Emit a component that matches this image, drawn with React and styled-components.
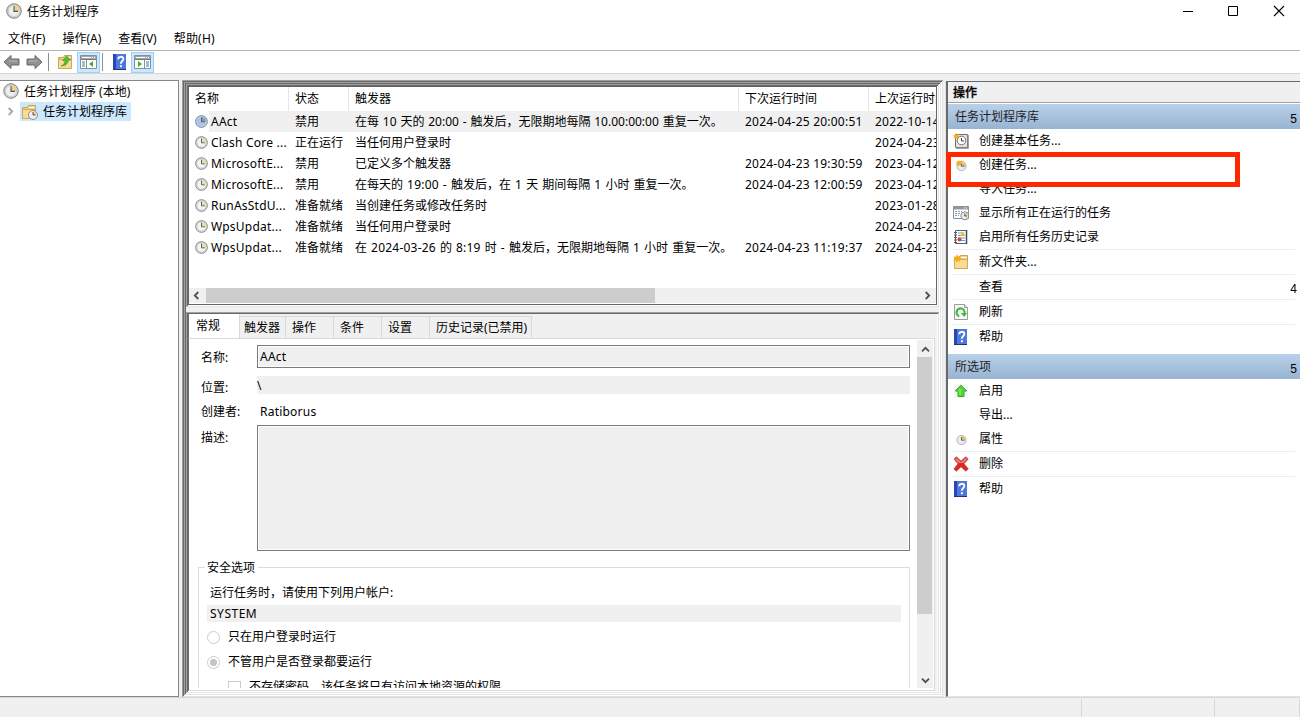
//App.jsx holds the task scheduler window
import React from 'react';
import styled, { createGlobalStyle } from 'styled-components';

const GlobalStyle = createGlobalStyle`
  * {
    box-sizing: border-box;
  }
  body {
    margin: 0;
    overflow: hidden;
    background: #f0f0f0;
    font-family: 'Noto Sans', 'Noto Sans CJK SC', sans-serif;
    font-size: 12px;
    line-height: 20px;
    color: #000;
  }
  svg {
    display: block;
    flex: none;
  }
`;

const Window = styled.div`
  display: flex;
  flex-direction: column;
  width: 1300px;
  height: 717px;
  overflow: hidden;
  white-space: pre;
  background: #f0f0f0;
`;

const TitleBar = styled.header`
  display: flex;
  align-items: center;
  height: 23px;
  padding-left: 6px;
  background: #fff;
`;

const Title = styled.span`
  flex: 1;
  padding: 2px 0 0 5px;
`;

const WindowButtons = styled.div`
  display: flex;
  gap: 34px;
  padding-right: 15px;
`;

const MenuBar = styled.nav`
  display: flex;
  gap: 17px;
  height: 28px;
  padding: 6px 0 0 8px;
  background: #fff;
  border-bottom: 1px solid #b4b4b4;
`;

const MenuItem = styled.span`
  letter-spacing: ${(p) => p.$spacing || '0'};
`;

const Toolbar = styled.div`
  display: flex;
  align-items: center;
  height: 23px;
  padding-top: 1px;
  background: #fff;
  border-bottom: 1px solid #d5d5d5;
`;

const ToolButton = styled.span`
  display: flex;
  align-items: center;
  justify-content: center;
  width: ${(p) => p.$width || 23}px;
  height: 21px;
  background: ${(p) => (p.$active ? '#cce8ff' : 'transparent')};
  border: 1px solid ${(p) => (p.$active ? '#99d1ff' : 'transparent')};
`;

const ToolDivider = styled.span`
  width: 1px;
  height: 18px;
  margin: 0 ${(p) => p.$right}px 0 ${(p) => p.$left}px;
  background: #8c8c8c;
`;

const Body = styled.main`
  display: flex;
  height: 624px;
  padding-top: 6px;
`;

const Tree = styled.aside`
  width: 179px;
  height: 617px;
  margin-right: 3px;
  background: #fff;
  border-top: 1px solid #828790;
  border-right: 1px solid #828790;
  border-bottom: 1px solid #828790;
`;

const TreeRow = styled.div`
  display: flex;
  align-items: center;
  height: ${(p) => p.$height || 20}px;
  padding-left: ${(p) => p.$indent || 3}px;
`;

const TreeLabel = styled.span`
  display: flex;
  align-items: center;
  height: 19px;
  margin-left: ${(p) => p.$gap || 0}px;
  padding: ${(p) => (p.$selected ? '0 4px 0 1px' : '2px 0 0')};
  gap: 5px;
  background: ${(p) => (p.$selected ? '#cce8ff' : 'transparent')};
`;

const Center = styled.section`
  display: flex;
  flex-direction: column;
  width: 761px;
  height: 617px;
  padding: 4px;
  margin-right: 3px;
  background: #f0f0f0;
  box-shadow: inset 1px 1px #a0a0a0, inset -1px -1px #e3e3e3, inset 2px 2px #696969, inset -2px -2px #fff,
    inset 3px 3px #a0a0a0, inset -3px -3px #e3e3e3, inset 4px 4px #696969, inset -4px -4px #fff;
`;

const Pane = styled.div`
  width: 753px;
  height: ${(p) => p.$height}px;
  padding: 2px;
  margin-bottom: ${(p) => p.$gap || 0}px;
  box-shadow: inset 1px 1px #a0a0a0, inset -1px -1px #e3e3e3, inset 2px 2px #696969, inset -2px -2px #fff;
`;

const List = styled.div`
  display: flex;
  flex-direction: column;
  width: 749px;
  height: 219px;
  overflow: hidden;
  background: #fff;
  border: 1px solid #646464;
`;

const ListRow = styled.div`
  display: grid;
  grid-template-columns: 100px 60px 390px 130px 180px;
  flex: none;
  height: ${(p) => (p.$head ? 24 : 21)}px;
  line-height: ${(p) => (p.$head ? 24 : 21)}px;
  background: ${(p) => (p.$selected ? 'linear-gradient(90deg, #fff 20px, #f0f0f0 20px)' : '#fff')};
`;

const Cell = styled.span`
  display: flex;
  align-items: center;
  gap: 3px;
  padding-left: 6px;
  overflow: hidden;
  border-right: 1px solid ${(p) => (p.$head ? '#e5e5e5' : 'transparent')};
`;

const Latin = styled.span`
  letter-spacing: ${(p) => p.$spacing ?? 0.22}px;
  word-spacing: ${(p) => p.$gap || 0}px;
`;

const HScroll = styled.div`
  display: flex;
  align-items: center;
  height: 15px;
  margin-top: auto;
  margin-bottom: 1px;
  padding: 0 4px 0 3px;
  background: #f0f0f0;
`;

const HThumb = styled.span`
  width: 449px;
  height: 15px;
  margin-left: 5px;
  margin-right: auto;
  background: #cdcdcd;
`;

const Tabs = styled.div`
  display: flex;
  align-items: flex-end;
  width: 749px;
  height: 24px;
  border-left: 1px solid #696969;
`;

const Tab = styled.span`
  width: ${(p) => p.$width}px;
  height: ${(p) => (p.$active ? 24 : 22)}px;
  padding-left: ${(p) => p.$pad}px;
  line-height: ${(p) => (p.$active ? 22 : 21)}px;
  background: ${(p) => (p.$active ? '#fff' : '#f0f0f0')};
  border-top: 1px solid ${(p) => (p.$active ? '#fff' : '#d9d9d9')};
  border-right: 1px solid #d9d9d9;
`;

const Page = styled.div`
  display: flex;
  width: 747px;
  height: 353px;
  padding: 1px 1px 2px 0;
  background: #fff;
  border: 1px solid #d9d9d9;
  border-left-color: #696969;
`;

const Form = styled.div`
  width: 728px;
  height: 348px;
  padding: 5px 0 0 12px;
  overflow: hidden;
`;

const Field = styled.div`
  display: flex;
  height: ${(p) => p.$height}px;
  margin-bottom: ${(p) => p.$gap}px;
`;

const FieldLabel = styled.label`
  width: 56px;
  padding-top: ${(p) => p.$top || 0}px;
`;

const Value = styled.div`
  width: 653px;
  padding-left: ${(p) => (p.$boxed ? 2 : p.$pad || 0)}px;
  line-height: ${(p) => p.$line || 20}px;
  background: ${(p) => (p.$plain ? '#fff' : '#f0f0f0')};
  border: ${(p) => (p.$boxed ? '1px solid #7a7a7a' : 'none')};
  box-shadow: ${(p) => (p.$boxed ? 'inset 0 0 0 1px #fff' : 'none')};
`;

const Group = styled.fieldset`
  width: 712px;
  height: 200px;
  margin: 0 0 0 -3px;
  padding: 5px 8px 0;
  border: 1px solid #dcdcdc;
`;

const Legend = styled.legend`
  height: 20px;
  margin-left: -2px;
  padding: 0 3px 0 2px;
`;

const GroupLine = styled.div`
  height: 22px;
  padding-left: 3px;
`;

const Account = styled.div`
  width: 694px;
  height: 17px;
  margin-bottom: 5px;
  padding-left: 3px;
  line-height: 17px;
  background: #f0f0f0;
`;

const Option = styled.div`
  display: flex;
  align-items: center;
  gap: 8px;
  height: 20px;
  margin-bottom: 5px;
  padding-left: ${(p) => p.$indent || 0}px;
`;

const Radio = styled.span`
  width: 13px;
  height: 13px;
  margin-top: 1px;
  border: 1px solid #ccc;
  border-radius: 50%;
  background: ${(p) => (p.$checked ? 'radial-gradient(#c4c4c4 3.2px, #fff 4px)' : '#fff')};
`;

const Checkbox = styled.span`
  width: 13px;
  height: 13px;
  margin-top: 1px;
  border: 1px solid #ccc;
`;

const VScroll = styled.div`
  display: flex;
  flex-direction: column;
  align-items: center;
  width: 16px;
  height: 348px;
  padding: 5px 0 3px;
  background: #f0f0f0;
`;

const VThumb = styled.span`
  width: 15px;
  height: 257px;
  margin: 3px 1px auto 0;
  background: #cdcdcd;
`;

const Actions = styled.aside`
  position: relative;
  width: 354px;
  height: 616px;
  margin-top: 1px;
  padding-top: 1px;
  background: #fff;
  border-left: 2px solid #696969;
  border-bottom: 1px solid #e3e3e3;
  box-shadow: inset 0 1px #696969, -1px 0 #e3e3e3;
`;

const ActionsTitle = styled.div`
  height: 21px;
  margin-bottom: 1px;
  padding-left: 5px;
  line-height: 22px;
  font-weight: 500;
  -webkit-text-stroke: 0.3px #000;
  background: #f0f0f0;
  border-bottom: 1px solid #a0a0a0;
`;

const Band = styled.div`
  display: flex;
  justify-content: space-between;
  height: 25px;
  margin-top: ${(p) => p.$top || 0}px;
  padding: 0 3px 0 7px;
  line-height: 25px;
  color: #1e1e1e;
  background: linear-gradient(#b9d1ea, #98b4d2);
`;

const Marker = styled.span`
  padding-top: 3px;
  font-family: 'Liberation Sans', sans-serif;
  color: #000;
`;

const Action = styled.div`
  display: flex;
  align-items: center;
  height: ${(p) => (p.$line ? 25 : 24)}px;
  margin: 0 5px;
  border-bottom: ${(p) => (p.$line ? '1px solid #ededed' : 'none')};

  ${Marker} {
    margin-right: -2px;
    padding-top: 5px;
  }
`;

const ActionIcon = styled.span`
  display: flex;
  justify-content: center;
  width: 16px;
  margin-right: 10px;
`;

const ActionText = styled.span`
  flex: 1;
`;

const Highlight = styled.div`
  position: absolute;
  top: 71px;
  left: -2px;
  width: 294px;
  height: 35px;
  border: 5px solid #ff2600;
`;

const StatusBar = styled.footer`
  display: flex;
  height: 20px;
  padding-top: 1px;
  border-top: 1px solid #d7d7d7;
`;

const StatusCell = styled.span`
  width: ${(p) => p.$width}px;
  border-right: 1px solid #d7d7d7;
`;

function ClockIcon({ size = 16, face = '#eceff0', wedge = '#f3cf86', rim = '#858585' }) {
  return (
    <svg width={size} height={size} viewBox="0 0 16 16">
      <circle cx="8" cy="8" r="7.3" fill="#d2d2d2" stroke={rim} />
      <circle cx="8" cy="8" r="5.6" fill={face} stroke="#b9bcbe" strokeWidth=".6" />
      <path d="M8 8V2.5A5.5 5.5 0 0 1 13.5 8z" fill={wedge} />
      <path d="M8 3.2v5.2h4" fill="none" stroke="#4d535a" strokeWidth="1.1" />
    </svg>
  );
}

function ArrowIcon({ right }) {
  return (
    <svg width="17" height="16" viewBox="0 0 17 16">
      <path
        d="M1 8 8 1.5V5h8v6H8v3.5z"
        transform={right ? 'rotate(180 8.5 8)' : undefined}
        fill="#929292"
        stroke="#686868"
        strokeLinejoin="round"
      />
      <path d={right ? 'M3 7h8' : 'M6 7h8'} stroke="#b9b9b9" />
    </svg>
  );
}

function FolderIcon({ kind }) {
  return (
    <svg width="17" height="16" viewBox="0 0 17 16">
      <path d="M1.5 14.5v-11h5l1-2h7v13z" fill="#f2d282" stroke="#c9a350" />
      <path d="M8.5 3.5h5" stroke="#fff" />
      <path d="M1.5 5.5h13v9h-13z" fill="#f7dc94" stroke="#d0aa58" />
      {kind === 'up' && (
        <path d="M4 11.8c2.6-.6 3.8-2.2 4-5H5.8L9.5 2l4.2 3.8-2.5.6c-.4 3.4-3 5.8-7.2 5.4z" fill="#55bd36" stroke="#378d22" strokeWidth=".6" />
      )}
      {kind === 'clock' && (
        <g>
          <circle cx="12" cy="11" r="4.5" fill="#edf0f2" stroke="#8b9297" />
          <path d="M12 11V7.3a3.7 3.7 0 0 1 3.7 3.7z" fill="#f3cf86" />
          <path d="M12 8v3h2.5" fill="none" stroke="#555" />
        </g>
      )}
      {kind === 'new' && <Star />}
    </svg>
  );
}

function Star() {
  return <path d="M4 0l1 2.5L8 1 6.8 3.8 9 5 6.5 5.8 7.5 8 4.8 6.8 3.5 9 3 6.3 0 6.8 2 4.8 0 2.5l3 .3z" fill="#f8a91c" />;
}

function PanelIcon({ right }) {
  return (
    <svg width="17" height="14" viewBox="0 0 17 14">
      <path d="M.5.5h16v13H.5z" fill="#fff" stroke="#8a8f94" />
      <path d="M1 1h15v3H1z" fill="#a2a8ae" />
      <path d="M2 2.5h9M12 2.5h1M14 2.5h1" stroke="#fff" />
      <path d="M1 4.5h15" stroke="#777" />
      <path d={right ? 'M10.5 5v8.5' : 'M6.5 5v8.5'} stroke="#8a8f94" />
      <path d={right ? 'M12 7h3M12 9h3M12 11h3' : 'M2 7h3M2 9h3M2 11h3'} stroke="#3e78b5" />
      <path d={right ? 'M4 6v6l4-3z' : 'M13 6v6l-4-3z'} fill="#3bb325" />
    </svg>
  );
}

function HelpIcon() {
  return (
    <svg width="16" height="16" viewBox="-1 0 16 16">
      <path d="M0 0h13v16H0z" fill="#2548b5" />
      <path d="M3 0h10v15H3z" fill="#5078dc" />
      <path d="M0 15.5h13" stroke="#26346e" />
      <path d="M5.2 5.2C5.2 2 10.4 2 10.4 5c0 2-2.6 2-2.6 4.7" fill="none" stroke="#fff" strokeWidth="1.8" />
      <path d="M6.9 11.2h1.9v2H6.9z" fill="#fff" />
    </svg>
  );
}

function BasicTaskIcon() {
  return (
    <svg width="16" height="16" viewBox="0 0 16 16">
      <path d="M2.5 1.5h12v13h-12z" fill="#e4e2e0" stroke="#77706d" />
      <path d="M15 2v13H3" fill="none" stroke="#8d8581" strokeWidth="1.5" />
      <circle cx="8.5" cy="7.5" r="4.3" fill="#fff" stroke="#777" />
      <path d="M8.5 5v3H11" fill="none" stroke="#444" />
      <g transform="scale(.75)">
        <Star />
      </g>
    </svg>
  );
}

function TaskIcon({ star }) {
  return (
    <svg width="16" height="16" viewBox="0 0 16 16">
      <circle cx="8.5" cy="9" r="4.6" fill="#e6ecf1" stroke="#b1b8be" />
      <path d="M8.5 9V4.7A4.3 4.3 0 0 1 12.8 9z" fill="#f4c46c" />
      <path d="M8.5 6v3.2h3" fill="none" stroke="#57616b" />
      {star && (
        <g transform="translate(2.5 2.5) scale(.8)">
          <Star />
        </g>
      )}
    </svg>
  );
}

function RunningIcon() {
  return (
    <svg width="17" height="16" viewBox="0 0 17 16">
      <path d="M.5 1.5h15v12H.5z" fill="#fff" stroke="#8b9198" />
      <path d="M1 2h14v2.5H1z" fill="#9199a2" />
      <path d="M11 3h1M13 3h1" stroke="#fff" />
      <path d="M2 6.5h7M2 8.5h5M2 10.5h4" stroke="#879bae" strokeDasharray="2 1" />
      <circle cx="11.8" cy="10.8" r="4" fill="#e8ebee" stroke="#83898e" />
      <path d="M11.8 10.8V7.5a3.3 3.3 0 0 1 3.3 3.3z" fill="#f3cf86" />
      <path d="M11.8 8.5v2.5H14" fill="none" stroke="#555" />
    </svg>
  );
}

function HistoryIcon() {
  return (
    <svg width="16" height="16" viewBox="0 0 16 16">
      <path d="M2.5 1.5h11v13h-11z" fill="#fff" stroke="#52657c" />
      <path d="M13.5 1v14" stroke="#2f4d75" strokeWidth="1.5" />
      <path d="M5 4h6M5 6.5h7M5 9h7M5 11.5h7" stroke="#6e9ccc" />
      <path d="M1 3.5h3M1 6h3M1 8.5h3M1 11h3M1 13.5h3" stroke="#555" />
      <path d="M9.5 2.5 12.5 7h-5z" fill="#f5bd16" />
      <circle cx="6.5" cy="10.5" r="2" fill="#d5402b" />
    </svg>
  );
}

function RefreshIcon() {
  return (
    <svg width="14" height="16" viewBox="0 0 14 16">
      <path d="M.5.5h10l3 3v12H.5z" fill="#f8f8f8" stroke="#9b9b9b" />
      <path d="M10.5.5v3h3" fill="#ddd" stroke="#9b9b9b" />
      <path d="M5.2 12.2a4 4 0 1 1 5.3-3.2" fill="none" stroke="#3eb83b" strokeWidth="2.2" />
      <path d="M7 9h6l-2.8 4z" fill="#3eb83b" />
    </svg>
  );
}

function EnableIcon() {
  return (
    <svg width="14" height="14" viewBox="0 0 14 14">
      <path d="M0 0h14v14H0z" fill="#f5f5f5" />
      <path d="M7 1.2 12.8 7H10v5.5H4V7H1.2z" fill="#55d33b" stroke="#37a925" />
      <path d="M6 5v6" stroke="#8cf06f" strokeWidth="1.4" />
    </svg>
  );
}

function DeleteIcon() {
  return (
    <svg width="16" height="16" viewBox="0 0 16 16">
      <path
        d="M1 3 3.5.8 8 5 12.8.8 15.2 3 11 7.8l4.3 5-2.5 2.4L8 10.8l-4.6 4.4L.9 12.9 5 7.8z"
        fill="#df2822"
        stroke="#b3423e"
        strokeWidth=".7"
      />
      <path d="M2 3 3.5 1.7 8 6l4.8-4.3L14.2 3 10.5 7h-5z" fill="#ec7d76" />
    </svg>
  );
}

function Chevron({ turn = 0, color = '#505050' }) {
  return (
    <svg width="9" height="9" viewBox="0 0 9 9">
      <path d="M1 6.3 4.5 2.8 8 6.3" fill="none" stroke={color} strokeWidth="1.8" transform={`rotate(${turn} 4.5 4.5)`} />
    </svg>
  );
}

// latin runs are set slightly wider than the chinese text round them
function Mixed({ text, spacing, gap }) {
  return (
    <span>
      {text.split(/([\x20-\x7e]+)/).map((part, i) =>
        i % 2 ? (
          <Latin key={i} $spacing={spacing} $gap={gap}>
            {part}
          </Latin>
        ) : (
          part
        )
      )}
    </span>
  );
}

const tasks = [
  ['AAct', '禁用', '在每 10 天的 20:00 - 触发后，无限期地每隔 10.00:00:00 重复一次。', '2024-04-25 20:00:51', '2022-10-14 20:00:51'],
  ['Clash Core ...', '正在运行', '当任何用户登录时', '', '2024-04-23 08:21:10'],
  ['MicrosoftE...', '禁用', '已定义多个触发器', '2024-04-23 19:30:59', '2023-04-12 19:30:59'],
  ['MicrosoftE...', '禁用', '在每天的 19:00 - 触发后，在 1 天 期间每隔 1 小时 重复一次。', '2024-04-23 12:00:59', '2023-04-12 12:00:59'],
  ['RunAsStdU...', '准备就绪', '当创建任务或修改任务时', '', '2023-01-28 10:12:40'],
  ['WpsUpdat...', '准备就绪', '当任何用户登录时', '', '2024-04-23 08:21:10'],
  ['WpsUpdat...', '准备就绪', '在 2024-03-26 的 8:19 时 - 触发后，无限期地每隔 1 小时 重复一次。', '2024-04-23 11:19:37', '2024-04-23 10:19:37'],
];

const tabs = [
  ['常规', 51, 7],
  ['触发器', 46, 4],
  ['操作', 48, 6],
  ['条件', 48, 6],
  ['设置', 48, 6],
  ['历史记录(已禁用)', 102, 6],
];

const libraryActions = [
  { text: '创建基本任务...', icon: <BasicTaskIcon /> },
  { text: '创建任务...', icon: <TaskIcon star /> },
  { text: '导入任务...' },
  { text: '显示所有正在运行的任务', icon: <RunningIcon /> },
  { text: '启用所有任务历史记录', icon: <HistoryIcon />, line: true },
  { text: '新文件夹...', icon: <FolderIcon kind="new" />, line: true },
  { text: '查看', marker: '4', line: true },
  { text: '刷新', icon: <RefreshIcon />, line: true },
  { text: '帮助', icon: <HelpIcon /> },
];

const selectedActions = [
  { text: '启用', icon: <EnableIcon /> },
  { text: '导出...' },
  { text: '属性', icon: <TaskIcon />, line: true },
  { text: '删除', icon: <DeleteIcon />, line: true },
  { text: '帮助', icon: <HelpIcon /> },
];

function ActionList({ items }) {
  return items.map((item) => (
    <Action key={item.text} $line={item.line}>
      <ActionIcon>{item.icon}</ActionIcon>
      <ActionText>{item.text}</ActionText>
      {item.marker && <Marker>{item.marker}</Marker>}
    </Action>
  ));
}

function TaskList() {
  return (
    <List>
      <ListRow $head>
        {['名称', '状态', '触发器', '下次运行时间', '上次运行时间'].map((name) => (
          <Cell key={name} $head>
            {name}
          </Cell>
        ))}
      </ListRow>
      {tasks.map((task, row) => (
        <ListRow key={row} $selected={row === 0}>
          {task.map((text, col) => (
            <Cell key={col}>
              {col === 0 && (
                <ClockIcon size={13} face={row ? '#f4f4f2' : '#a9c8e8'} wedge={row ? '#f0dca0' : '#7f9fb8'} rim={row ? '#858585' : '#5b7fa6'} />
              )}
              <Mixed text={text} spacing={col === 2 && row === 0 ? 0 : 0.22} gap={col === 2 ? 0.7 : 0} />
            </Cell>
          ))}
        </ListRow>
      ))}
      <HScroll>
        <Chevron turn={-90} />
        <HThumb />
        <Chevron turn={90} />
      </HScroll>
    </List>
  );
}

function Details() {
  return (
    <Page>
      <Form>
        <Field $height={23} $gap={8}>
          <FieldLabel $top={3}>名称:</FieldLabel>
          <Value $boxed $line={22}>
            <Latin>AAct</Latin>
          </Value>
        </Field>
        <Field $height={18} $gap={8}>
          <FieldLabel $top={2}>位置:</FieldLabel>
          <Value>\</Value>
        </Field>
        <Field $height={18} $gap={5}>
          <FieldLabel>创建者:</FieldLabel>
          <Value $plain $pad={3}>
            <Latin>Ratiborus</Latin>
          </Value>
        </Field>
        <Field $height={126} $gap={7}>
          <FieldLabel $top={3}>描述:</FieldLabel>
          <Value $boxed />
        </Field>
        <Group>
          <Legend>安全选项</Legend>
          <GroupLine>运行任务时，请使用下列用户帐户:</GroupLine>
          <Account>
            <Latin $spacing={0.5}>SYSTEM</Latin>
          </Account>
          <Option>
            <Radio />
            只在用户登录时运行
          </Option>
          <Option>
            <Radio $checked />
            不管用户是否登录都要运行
          </Option>
          <Option $indent={21}>
            <Checkbox />
            不存储密码。该任务将只有访问本地资源的权限
          </Option>
        </Group>
      </Form>
      <VScroll>
        <Chevron />
        <VThumb />
        <Chevron turn={180} />
      </VScroll>
    </Page>
  );
}

function App() {
  return (
    <Window>
      <GlobalStyle />
      <TitleBar>
        <ClockIcon />
        <Title>任务计划程序</Title>
        <WindowButtons>
          <svg width="12" height="12" viewBox="0 0 12 12">
            <path d="M2 6.5h10" stroke="#000" />
          </svg>
          <svg width="12" height="12" viewBox="0 0 12 12">
            <path d="M1.5 1.5h9v9h-9z" fill="none" stroke="#000" />
          </svg>
          <svg width="12" height="12" viewBox="0 0 12 12">
            <path d="m1 1 10 10M11 1 1 11" stroke="#000" strokeWidth="1.1" />
          </svg>
        </WindowButtons>
      </TitleBar>
      <MenuBar>
        <MenuItem>文件(F)</MenuItem>
        <MenuItem>操作(A)</MenuItem>
        <MenuItem>查看(V)</MenuItem>
        <MenuItem $spacing="0.2px">帮助(H)</MenuItem>
      </MenuBar>
      <Toolbar>
        <ToolButton>
          <ArrowIcon />
        </ToolButton>
        <ToolButton>
          <ArrowIcon right />
        </ToolButton>
        <ToolDivider $left={2} $right={4} />
        <ToolButton $width={24}>
          <FolderIcon kind="up" />
        </ToolButton>
        <ToolButton $active>
          <PanelIcon />
        </ToolButton>
        <ToolDivider $left={2} $right={5} />
        <ToolButton>
          <HelpIcon />
        </ToolButton>
        <ToolButton $active>
          <PanelIcon right />
        </ToolButton>
      </Toolbar>
      <Body>
        <Tree>
          <TreeRow $height={21}>
            <ClockIcon />
            <TreeLabel $gap={5}>任务计划程序 (本地)</TreeLabel>
          </TreeRow>
          <TreeRow $indent={6}>
            <Chevron turn={90} color="#a6a6a6" />
            <TreeLabel $gap={5} $selected>
              <FolderIcon kind="clock" />
              任务计划程序库
            </TreeLabel>
          </TreeRow>
        </Tree>
        <Center>
          <Pane $height={223} $gap={5}>
            <TaskList />
          </Pane>
          <Pane $height={381}>
            <Tabs>
              {tabs.map(([name, width, pad], i) => (
                <Tab key={name} $width={width} $pad={pad} $active={i === 0}>
                  {name}
                </Tab>
              ))}
            </Tabs>
            <Details />
          </Pane>
        </Center>
        <Actions>
          <ActionsTitle>操作</ActionsTitle>
          <Band>
            任务计划程序库
            <Marker>5</Marker>
          </Band>
          <ActionList items={libraryActions} />
          <Band $top={5}>
            所选项
            <Marker>5</Marker>
          </Band>
          <ActionList items={selectedActions} />
          <Highlight />
        </Actions>
      </Body>
      <StatusBar>
        <StatusCell $width={1082} />
        <StatusCell $width={133} />
        <StatusCell $width={85} />
      </StatusBar>
    </Window>
  );
}

export default App;
